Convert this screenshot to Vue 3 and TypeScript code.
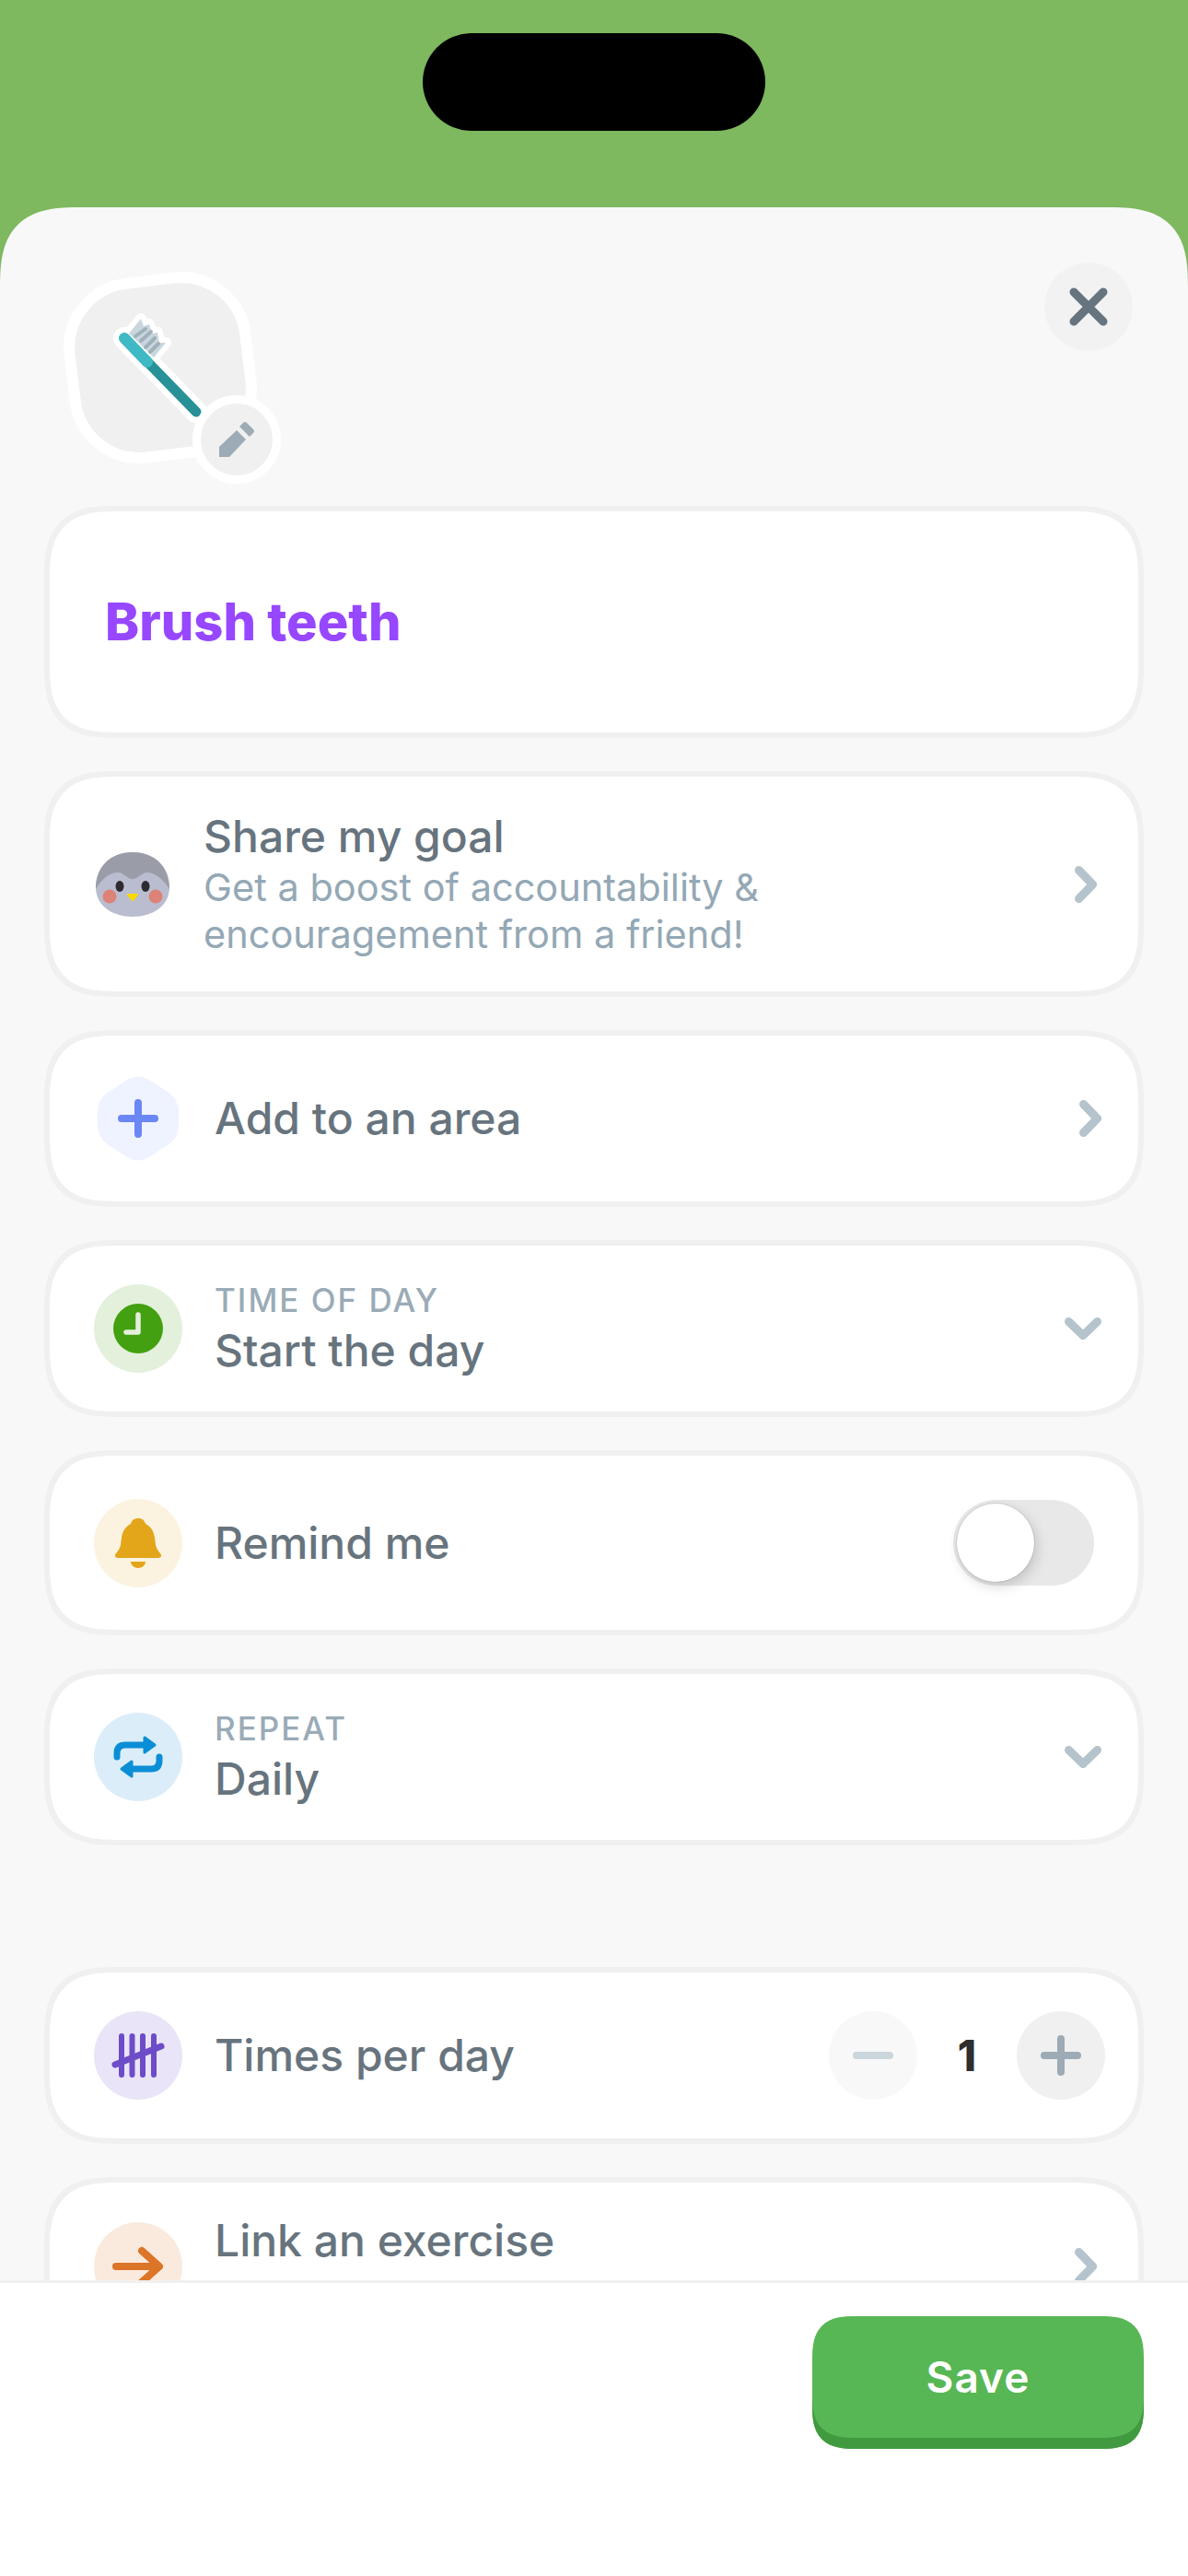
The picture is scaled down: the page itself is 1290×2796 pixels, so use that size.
<script setup lang="ts">
import { ref } from 'vue'

const goalName = ref('Brush teeth')
const timesPerDay = ref(1)
const remindMe = ref(false)
</script>

<template>
  <div class="screen">
    <div class="island"></div>
    <div class="sheet">
      <div class="scroller">
        <div class="head">
          <svg class="avatar" width="300" height="260" viewBox="0 0 300 260">
            <rect x="38" y="24" width="192" height="190" rx="70" fill="#f0f0f0" stroke="#fff" stroke-width="12" transform="rotate(-7 134 119)" />
            <!-- toothbrush -->
            <path d="M113 66 116 74 122 72 125 82 131 81 133 92 140 92 127 108 100 82Z" fill="#fff" stroke="#fff" stroke-width="12" stroke-linejoin="round" />
            <path d="M95 87 173 167" stroke="#fff" stroke-width="24" stroke-linecap="round" />
            <path d="M113 66 116 74 122 72 125 82 131 81 133 92 140 92 127 108 100 82Z" fill="#c9d6dd" />
            <path d="M107 85 118 77M113 90 124 80M118 97 128 87M123 102 132 93" stroke="#a0b0bb" stroke-width="4" stroke-linecap="round" />
            <path d="M95 87 173 167" stroke="#279197" stroke-width="11" stroke-linecap="round" />
            <path d="M95 87 120 113" stroke="#3fb9c4" stroke-width="12" stroke-linecap="round" />
            <!-- edit badge -->
            <circle cx="217" cy="197" r="43.5" fill="#f0f0f0" stroke="#fff" stroke-width="9" />
            <path d="M198 205 217 187 227 197 209 216H198Z" fill="#9cabb5" />
            <path d="M220 183 224 179Q226 177 228 179L235 186Q237 188 235 190L231 194Z" fill="#9cabb5" />
          </svg>
          <button class="close">
            <svg width="48" height="48" viewBox="0 0 48 48">
              <path d="M8 8 40 40M40 8 8 40" stroke="#65747f" stroke-width="9" stroke-linecap="round" />
            </svg>
          </button>
        </div>

        <div class="list">
          <div class="card name-card">{{ goalName }}</div>

          <div class="card share-card">
            <svg class="penguin" width="80" height="70" viewBox="0 0 80 70">
              <path d="M40 0C64 0 80 16 80 38 80 58 62 70 40 70 18 70 0 58 0 38 0 16 16 0 40 0Z" fill="#b9bdcf" />
              <path d="M0 40C0 16 16 0 40 0 64 0 80 16 80 40 74 30 64 22 56 22 50 22 46 29 40 29 34 29 30 22 24 22 14 22 6 30 0 40Z" fill="#9a9ca8" />
              <ellipse cx="26" cy="37" rx="4.500" ry="6" fill="#2d2a30" />
              <ellipse cx="54" cy="37" rx="4.500" ry="6" fill="#2d2a30" />
              <circle cx="15" cy="48" r="7.500" fill="#dc8277" />
              <circle cx="65" cy="48" r="7.500" fill="#dc8277" />
              <path d="M35 46H45L40 52Z" fill="#fbd800" stroke="#fbd800" stroke-width="2" stroke-linejoin="round" />
            </svg>
            <div class="share-text">
              <div class="title">Share my goal</div>
              <div class="sub">Get a boost of accountability &amp;<br />encouragement from a friend!</div>
            </div>
            <svg class="chevron-right" width="24" height="40" viewBox="0 0 24 40">
              <path d="M4.500 4.500 19.500 20 4.500 35.500" fill="none" stroke="#b4c3cc" stroke-width="9" stroke-linecap="round" stroke-linejoin="round" />
            </svg>
          </div>

          <div class="card row">
            <svg class="icon" width="96" height="96" viewBox="0 0 96 96">
              <path d="M38 5Q48 0 58 5L80 19Q92 27 92 40V56Q92 69 80 77L58 91Q48 96 38 91L16 77Q4 69 4 56V40Q4 27 16 19Z" fill="#eff2ff" />
              <path d="M48 31V65M30 48H66" stroke="#6b87f5" stroke-width="8" stroke-linecap="round" />
            </svg>
            <div class="title">Add to an area</div>
            <svg class="chevron-right" width="24" height="40" viewBox="0 0 24 40">
              <path d="M4.500 4.500 19.500 20 4.500 35.500" fill="none" stroke="#b4c3cc" stroke-width="9" stroke-linecap="round" stroke-linejoin="round" />
            </svg>
          </div>

          <div class="card row">
            <svg class="icon" width="96" height="96" viewBox="0 0 96 96">
              <circle cx="48" cy="48" r="48" fill="#e3f0dc" />
              <circle cx="48" cy="48" r="27" fill="#43a010" />
              <path d="M48 33V52H35" fill="none" stroke="#e4f0dd" stroke-width="5.500" stroke-linecap="round" stroke-linejoin="round" />
            </svg>
            <div class="stack">
              <div class="label">TIME OF DAY</div>
              <div class="title">Start the day</div>
            </div>
            <svg class="chevron-down" width="40" height="24" viewBox="0 0 40 24">
              <path d="M4.500 4.500 20 19.500 35.500 4.500" fill="none" stroke="#b4c3cc" stroke-width="9" stroke-linecap="round" stroke-linejoin="round" />
            </svg>
          </div>

          <div class="card row remind-card">
            <svg class="icon" width="96" height="96" viewBox="0 0 96 96">
              <circle cx="48" cy="48" r="48" fill="#fbf3e0" />
              <path d="M48 21C52 21 55 23 56 27 62 30 65 35 66 42L67 50C68 54 70 57 72 59 74 61 73 64 70 64H26C23 64 22 61 24 59 26 57 28 54 29 50L30 42C31 35 34 30 40 27 41 23 44 21 48 21Z" fill="#e3a51a" />
              <path d="M40 68H56C56 72 52 75 48 75 44 75 40 72 40 68Z" fill="#e3a51a" />
            </svg>
            <div class="title">Remind me</div>
            <div class="toggle" :class="{ on: remindMe }">
              <div class="knob"></div>
            </div>
          </div>

          <div class="card row">
            <svg class="icon" width="96" height="96" viewBox="0 0 96 96">
              <circle cx="48" cy="48" r="48" fill="#dbedf8" />
              <path d="M25 48V44Q25 35 34 35H60" fill="none" stroke="#0b8ed6" stroke-width="7" stroke-linecap="round" />
              <path d="M55 27 66 35 55 43Z" fill="#0b8ed6" stroke="#0b8ed6" stroke-width="3" stroke-linejoin="round" />
              <path d="M71 48V52Q71 61 62 61H36" fill="none" stroke="#0b8ed6" stroke-width="7" stroke-linecap="round" />
              <path d="M41 53 30 61 41 69Z" fill="#0b8ed6" stroke="#0b8ed6" stroke-width="3" stroke-linejoin="round" />
            </svg>
            <div class="stack">
              <div class="label">REPEAT</div>
              <div class="title">Daily</div>
            </div>
            <svg class="chevron-down" width="40" height="24" viewBox="0 0 40 24">
              <path d="M4.500 4.500 20 19.500 35.500 4.500" fill="none" stroke="#b4c3cc" stroke-width="9" stroke-linecap="round" stroke-linejoin="round" />
            </svg>
          </div>

          <div class="card row times-card">
            <svg class="icon" width="96" height="96" viewBox="0 0 96 96">
              <circle cx="48" cy="48" r="48" fill="#e9e4f7" />
              <path d="M30 27V69M41.500 27V69M53 27V69M65 27V69" stroke="#6d4cc8" stroke-width="6" stroke-linecap="round" />
              <path d="M23 58 73 38" stroke="#6d4cc8" stroke-width="7" stroke-linecap="round" />
            </svg>
            <div class="title">Times per day</div>
            <div class="stepper">
              <div class="step minus">
                <svg width="44" height="44" viewBox="0 0 44 44">
                  <path d="M4 22H40" stroke="#cbd5dc" stroke-width="8" stroke-linecap="round" />
                </svg>
              </div>
              <div class="count">{{ timesPerDay }}</div>
              <div class="step plus">
                <svg width="44" height="44" viewBox="0 0 44 44">
                  <path d="M4 22H40M22 4V40" stroke="#9cabb5" stroke-width="8" stroke-linecap="round" />
                </svg>
              </div>
            </div>
          </div>

          <div class="card link-card">
            <svg class="icon" width="96" height="96" viewBox="0 0 96 96">
              <circle cx="48" cy="48" r="48" fill="#faeadd" />
              <path d="M24 48H70M52 31 71 48 52 65" fill="none" stroke="#dc7528" stroke-width="8" stroke-linecap="round" stroke-linejoin="round" />
            </svg>
            <div class="link-text">
              <div class="title">Link an exercise</div>
            </div>
            <svg class="chevron-right" width="24" height="40" viewBox="0 0 24 40">
              <path d="M4.500 4.500 19.500 20 4.500 35.500" fill="none" stroke="#b4c3cc" stroke-width="9" stroke-linecap="round" stroke-linejoin="round" />
            </svg>
          </div>
        </div>
      </div>

      <div class="footer">
        <button class="save">Save</button>
      </div>
    </div>
  </div>
</template>

<style scoped>
.screen {
  position: relative;
  width: 1290px;
  height: 2796px;
  overflow: hidden;
  background: #7eb85f;
  padding-top: 225px;
  box-sizing: border-box;
  font-family: Inter, "Noto Sans", sans-serif;
}

.island {
  position: absolute;
  left: 459px;
  top: 36px;
  width: 372px;
  height: 106px;
  border-radius: 53px;
  background: #000;
}

.sheet {
  display: flex;
  flex-direction: column;
  height: 2571px;
  background: #f8f8f8;
  border-radius: 88px 88px 0 0;
  corner-shape: superellipse(1.5);
  overflow: hidden;
}

.scroller {
  flex: 1;
  min-height: 0;
  overflow: hidden;
}

.head {
  display: flex;
  justify-content: space-between;
  align-items: flex-start;
  height: 324px;
  padding: 55px 60px 0 40px;
  box-sizing: border-box;
}

.avatar {
  display: block;
}

.close {
  display: flex;
  align-items: center;
  justify-content: center;
  width: 96px;
  height: 96px;
  margin-top: 5px;
  padding: 0;
  border: none;
  border-radius: 50%;
  background: #f2f2f2;
}

.list {
  display: flex;
  flex-direction: column;
  gap: 36px;
  padding: 0 48px;
}

.card {
  box-sizing: border-box;
  flex: none;
  background: #fff;
  border: 6px solid #f0f0f0;
  border-radius: 80px;
  corner-shape: superellipse(1.5);
}

.name-card {
  display: flex;
  align-items: center;
  height: 252px;
  padding-left: 60px;
  font-size: 56px;
  font-weight: 800;
  color: #9747ff;
}

.share-card {
  display: flex;
  align-items: center;
  height: 245px;
  padding: 0 45px 0 50px;
}

.share-text {
  margin-left: 37px;
  flex: 1;
}

.share-text .sub {
  margin-top: 2px;
  font-size: 41.500px;
  line-height: 51px;
  color: #94a8b5;
}

.title {
  font-size: 48px;
  line-height: 56px;
  font-weight: 550;
  color: #67747e;
}

.row {
  display: flex;
  align-items: center;
  height: 192px;
  padding: 0 40px 0 48px;
}

.row .icon {
  flex: none;
  margin-right: 35px;
}

.row .title,
.row .stack {
  flex: 1;
}

.stack .label {
  font-size: 35px;
  line-height: 40px;
  font-weight: 500;
  letter-spacing: 2px;
  color: #9aabb7;
}

.stack .title {
  margin-top: 8px;
  line-height: 54px;
}

.chevron-right,
.chevron-down {
  flex: none;
}

.remind-card {
  height: 201px;
}

.times-card {
  margin-top: 96px;
}

.toggle {
  box-sizing: border-box;
  flex: none;
  display: flex;
  align-items: center;
  width: 153px;
  height: 93px;
  margin-right: 8px;
  padding-left: 4px;
  border-radius: 47px;
  background: #e8e8e8;
}

.knob {
  width: 84px;
  height: 85px;
  border-radius: 50%;
  background: #fff;
  box-shadow: 0 0 0 1px rgba(0, 0, 0, 0.08), 3px 5px 14px rgba(0, 0, 0, 0.16);
}

.stepper {
  display: flex;
  align-items: center;
  flex: none;
  margin-right: -4px;
}

.step {
  display: flex;
  align-items: center;
  justify-content: center;
  width: 96px;
  height: 96px;
  border-radius: 50%;
}

.minus {
  background: #f8f8f8;
}

.plus {
  background: #f0f0f0;
}

.count {
  width: 108px;
  text-align: center;
  font-size: 46px;
  font-weight: 800;
  color: #2e2e2e;
}

.link-card {
  display: flex;
  align-items: flex-start;
  height: 194px;
  padding: 0 45px 0 48px;
}

.link-card .icon {
  flex: none;
  margin: 43px 35px 0 0;
}

.link-text {
  flex: 1;
  margin-top: 35px;
}

.link-card .chevron-right {
  margin-top: 71px;
}

.footer {
  flex: none;
  display: flex;
  justify-content: flex-end;
  align-items: flex-start;
  height: 321px;
  box-sizing: border-box;
  padding: 36px 48px 0 0;
  background: #fff;
  border-top: 3px solid #f0f0f0;
}

.save {
  width: 360px;
  height: 144px;
  padding: 0 0 12px;
  border: none;
  border-radius: 48px;
  corner-shape: superellipse(1.5);
  background: #58b755;
  box-shadow: inset 0 -12px 0 #419a3f;
  font-family: Inter, "Noto Sans", sans-serif;
  font-size: 46px;
  font-weight: 600;
  letter-spacing: 1px;
  color: #fff;
}
</style>

<style>
html,
body {
  margin: 0;
  background: #7eb85f;
}
</style>
